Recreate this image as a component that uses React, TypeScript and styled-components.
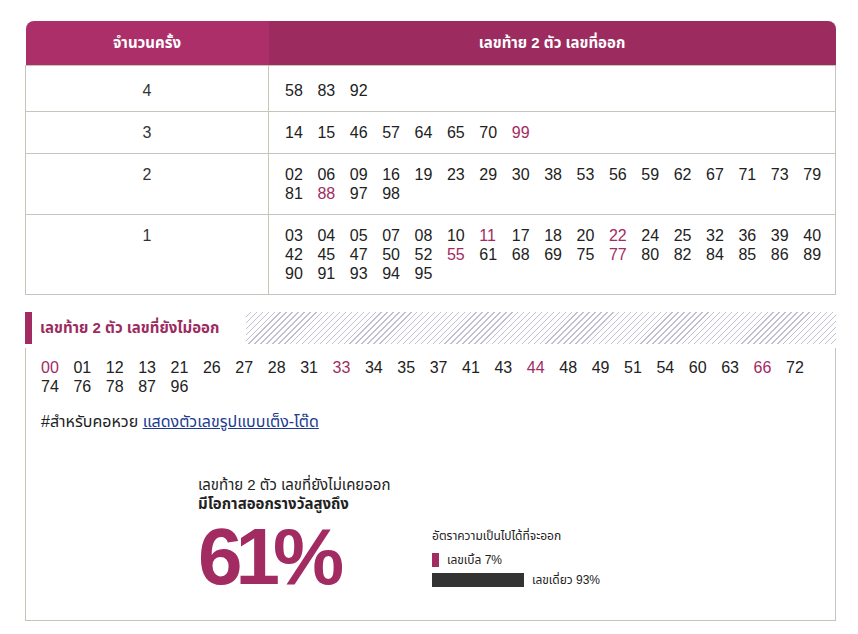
import React from 'react';
import styled, { createGlobalStyle } from 'styled-components';

const MAGENTA = '#a22b62';
const LINE = '#c8c4bc';

const GlobalStyle = createGlobalStyle`
  body {
    margin: 0;
    background: #fff;
    font-family: Tahoma, "Liberation Sans", "Noto Sans Thai", "Noto Sans", sans-serif;
    color: #222;
  }
`;

const ROWS: { count: number; numbers: string[] }[] = [
  { count: 4, numbers: ['58', '83', '92'] },
  { count: 3, numbers: ['14', '15', '46', '57', '64', '65', '70', '99'] },
  {
    count: 2,
    numbers: ['02', '06', '09', '16', '19', '23', '29', '30', '38', '53', '56', '59', '62', '67', '71', '73', '79', '81', '88', '97', '98'],
  },
  {
    count: 1,
    numbers: [
      '03', '04', '05', '07', '08', '10', '11', '17', '18', '20', '22', '24', '25', '32', '36', '39', '40',
      '42', '45', '47', '50', '52', '55', '61', '68', '69', '75', '77', '80', '82', '84', '85', '86', '89',
      '90', '91', '93', '94', '95',
    ],
  },
];

const MISSING = [
  '00', '01', '12', '13', '21', '26', '27', '28', '31', '33', '34', '35', '37', '41', '43', '44', '48', '49',
  '51', '54', '60', '63', '66', '72', '74', '76', '78', '87', '96',
];

const isDouble = (n: string) => n[0] === n[1];

const Page = styled.div`
  width: 811px;
  padding: 21px 0 14px 25px;
`;

const Table = styled.table`
  width: 100%;
  border-collapse: collapse;
  table-layout: fixed;
`;

const HeadCell = styled.th<{ $dark?: boolean }>`
  height: 44px;
  padding: 0;
  background: ${({ $dark }) => ($dark ? '#9c2b60' : '#ac2f6a')};
  color: #fff;
  font-size: 15px;
  font-weight: bold;
  text-align: center;
  border-top-left-radius: ${({ $dark }) => ($dark ? '0' : '8px')};
  border-top-right-radius: ${({ $dark }) => ($dark ? '8px' : '0')};
`;

const CountCell = styled.td`
  border: 1px solid ${LINE};
  padding: 11px 0;
  text-align: center;
  vertical-align: top;
  font-size: 16px;
  line-height: 19px;
  color: #333;
`;

const NumberCell = styled.td`
  border: 1px solid ${LINE};
  padding: 11px 0 11px 16px;
  vertical-align: top;
  font-size: 16px;
  line-height: 19px;
`;

// a touch wider than the cell so the 17th number fits on the line
const NumberWrap = styled.div`
  width: 560px;
`;

const FirstRow = styled.tr`
  td {
    padding-top: 15px;
    padding-bottom: 11px;
  }
`;

const Num = styled.span<{ $hot?: boolean }>`
  display: inline-block;
  width: 32.4px;
  color: ${({ $hot }) => ($hot ? MAGENTA : '#222')};
`;

const SectionTitle = styled.div`
  display: flex;
  height: 32px;
  margin-top: 17px;
`;

const Accent = styled.div`
  width: 7px;
  background: ${MAGENTA};
`;

const TitleText = styled.h2`
  margin: 0;
  padding: 0 27px 0 8px;
  font-size: 15px;
  font-weight: bold;
  line-height: 32px;
  color: #9c2b60;
`;

const Hatch = styled.div`
  flex: 1;
  background: repeating-linear-gradient(
    -45deg,
    #fff 0 3.2px,
    #c2bed2 3.2px 4.2px
  );
`;

const Box = styled.div`
  margin-top: 4px;
  border: 1px solid ${LINE};
  border-top: none;
  padding: 10px 0 23px 15px;
  font-size: 16px;
  line-height: 19px;
`;

const Note = styled.p`
  margin: 16px 0 0;
  font-size: 16px;
  line-height: 19px;
  color: #222;
`;

const NoteLink = styled.a`
  color: #1c3b8f;
  text-decoration: underline;
`;

const Stats = styled.div`
  display: flex;
  margin: 44px 0 0 157px;
`;

const StatsMain = styled.div`
  width: 234px;
`;

const StatsLine = styled.div<{ $bold?: boolean }>`
  font-size: 15px;
  line-height: 19px;
  font-weight: ${({ $bold }) => ($bold ? 'bold' : 'normal')};
  color: #222;
`;

const BigPercent = styled.div`
  margin-top: 4px;
  font-family: "Liberation Sans", sans-serif;
  font-size: 80px;
  line-height: 80px;
  font-weight: bold;
  letter-spacing: -7px;
  color: #a22b62;
`;

const StatsSide = styled.div`
  margin-top: 52px;
`;

const SideTitle = styled.div`
  font-size: 12px;
  line-height: 18px;
  color: #222;
`;

const LegendList = styled.div`
  margin-top: 5px;
`;

const Legend = styled.div`
  display: flex;
  align-items: center;
  gap: 8px;
  height: 20px;
  font-size: 12px;
  color: #222;
`;

const Bar = styled.div<{ $color: string }>`
  height: 14px;
  background: ${({ $color }) => $color};
`;

const LEGEND = [
  { label: 'เลขเบิ้ล 7%', value: 7, color: MAGENTA },
  { label: 'เลขเดี่ยว 93%', value: 92, color: '#333' },
];

const App = () => {
  return (
    <Page>
      <GlobalStyle />
      <Table>
        <thead>
          <tr>
            <HeadCell style={{ width: 243 }}>จำนวนครั้ง</HeadCell>
            <HeadCell $dark>เลขท้าย 2 ตัว เลขที่ออก</HeadCell>
          </tr>
        </thead>
        <tbody>
          {ROWS.map((row, i) => {
            const Row = i === 0 ? FirstRow : 'tr';
            return (
              <Row key={row.count}>
                <CountCell>{row.count}</CountCell>
                <NumberCell>
                  <NumberWrap>
                    {row.numbers.map((n) => (
                      <Num key={n} $hot={isDouble(n)}>
                        {n}
                      </Num>
                    ))}
                  </NumberWrap>
                </NumberCell>
              </Row>
            );
          })}
        </tbody>
      </Table>

      <SectionTitle>
        <Accent />
        <TitleText>เลขท้าย 2 ตัว เลขที่ยังไม่ออก</TitleText>
        <Hatch />
      </SectionTitle>

      <Box>
        <div>
          {MISSING.map((n) => (
            <Num key={n} $hot={isDouble(n)}>
              {n}
            </Num>
          ))}
        </div>
        <Note>
          #สำหรับคอหวย <NoteLink href="#">แสดงตัวเลขรูปแบบเต็ง-โต๊ด</NoteLink>
        </Note>

        <Stats>
          <StatsMain>
            <StatsLine>เลขท้าย 2 ตัว เลขที่ยังไม่เคยออก</StatsLine>
            <StatsLine $bold>มีโอกาสออกรางวัลสูงถึง</StatsLine>
            <BigPercent>61%</BigPercent>
          </StatsMain>
          <StatsSide>
            <SideTitle>อัตราความเป็นไปได้ที่จะออก</SideTitle>
            <LegendList>
              {LEGEND.map((l) => (
                <Legend key={l.label}>
                  <Bar $color={l.color} style={{ width: l.value }} />
                  {l.label}
                </Legend>
              ))}
            </LegendList>
          </StatsSide>
        </Stats>
      </Box>
    </Page>
  );
};

export default App;
